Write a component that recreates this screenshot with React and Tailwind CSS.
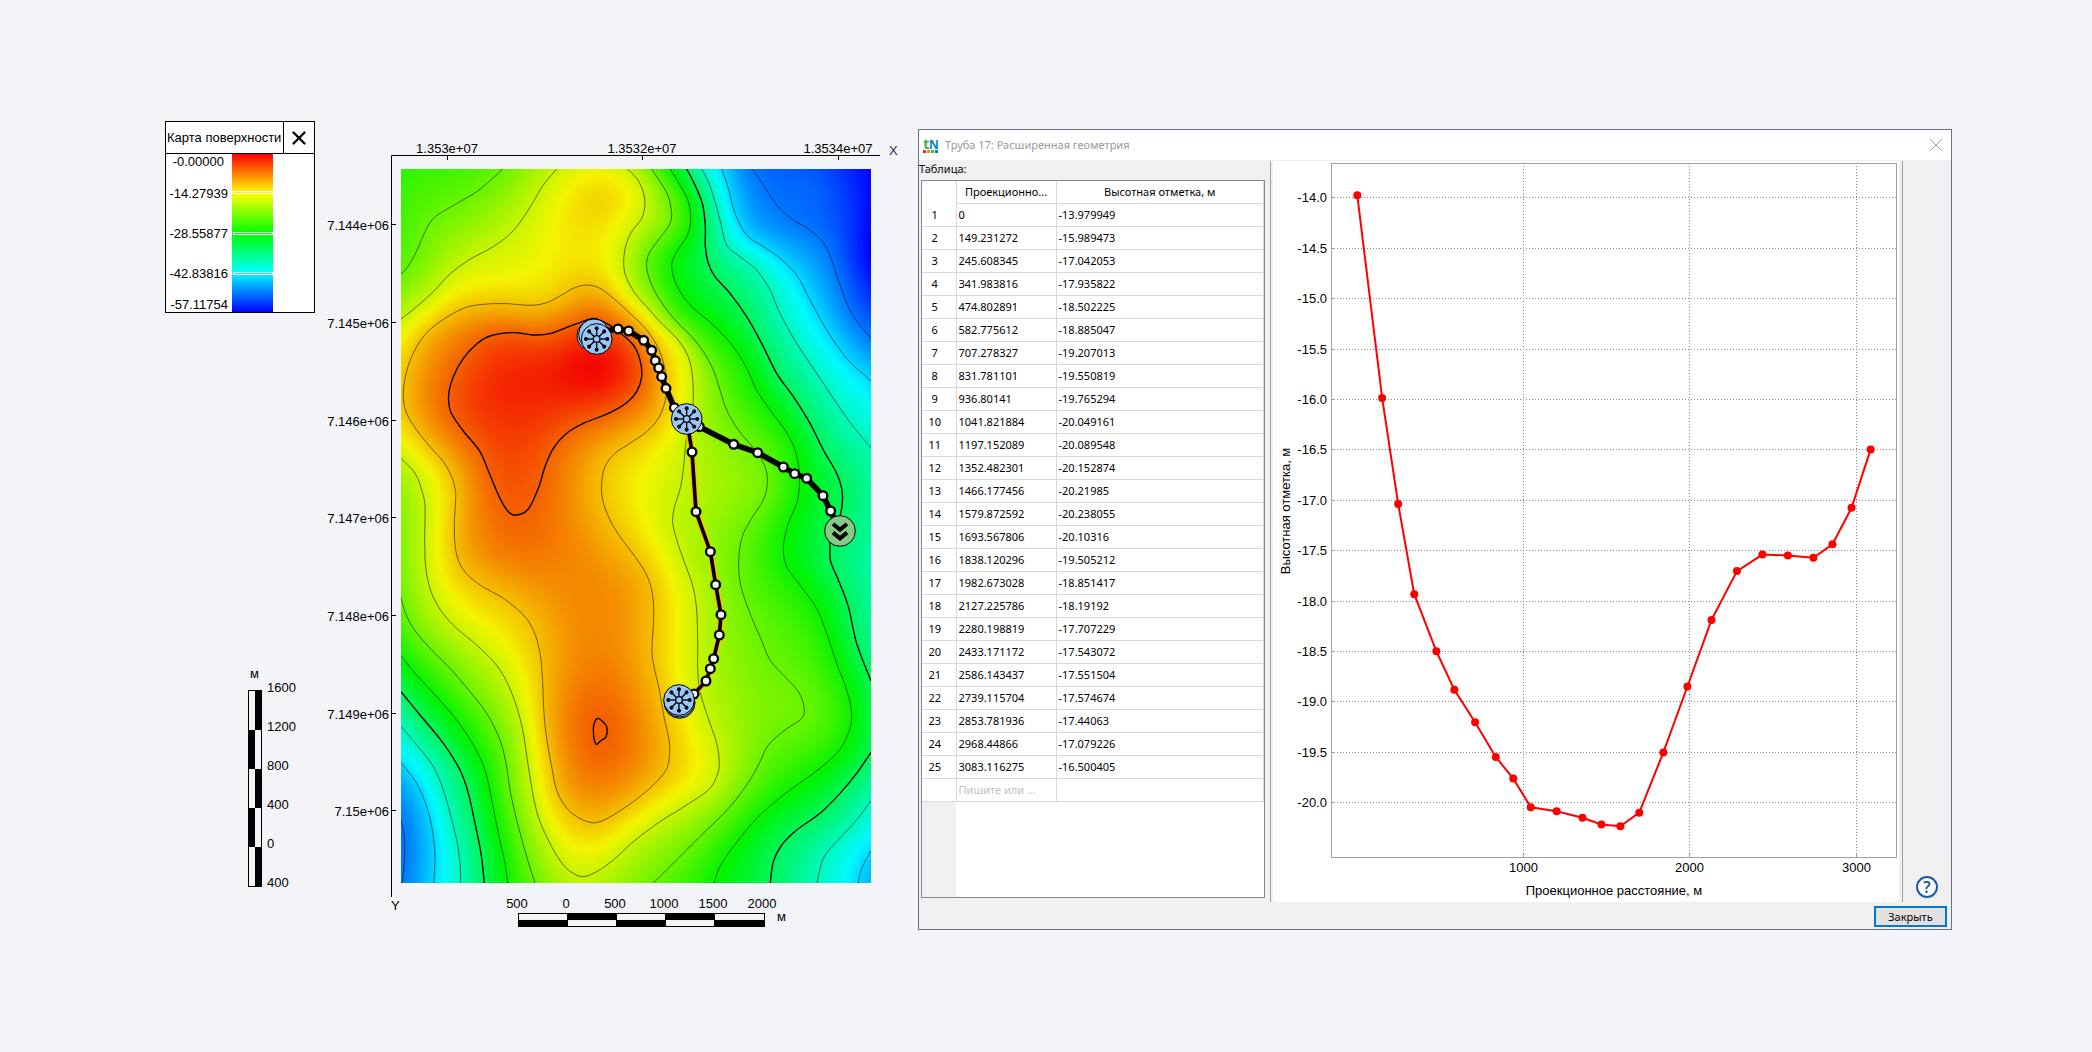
import { useEffect, useRef } from "react";
import { X } from "lucide-react";

// Surface drawing units: three per pixel
const MAP_W = 1410;
const MAP_H = 2142;

// level: 0 red, 1 yellow, 2 green, 3 cyan, 4 blue
const contours = [
  { level: 1.57, pts: "305,0 267,35 227,68 177,98 137,121 97,148 72,188 55,228 37,266 19,295 0,316" },
  { level: 1.18, pts: "467,0 427,48 397,98 362,153 327,195 277,233 207,271 147,315 97,368 47,413 0,450" },
  {
    level: 1.18,
    pts: "679,0 707,28 725,63 732,103 722,148 692,188 675,228 668,278 675,323 702,373 737,413 777,458 827,508 857,553 872,603 877,673 873,730 855,818 849,883 839,953 822,1008 815,1048 819,1083 837,1143 859,1203 877,1258 887,1323 890,1413 890,1493 894,1553 907,1603 927,1663 947,1723 955,1783 947,1823 922,1863 857,1908 777,1958 697,2018 637,2073 587,2108 547,2123 517,2113 487,2088 452,2033 417,1958 399,1893 382,1793 367,1693 347,1613 317,1538 282,1483 227,1428 167,1378 122,1328 92,1273 75,1203 71,1113 72,1013 62,963 42,913 0,868",
  },
  {
    level: 0.79,
    closed: true,
    pts: "557,348 597,358 637,388 687,433 737,483 772,538 790,593 796,653 792,698 772,748 737,788 687,823 642,853 612,893 602,943 605,993 627,1053 657,1103 702,1163 737,1218 754,1273 758,1343 753,1443 759,1493 775,1563 789,1643 804,1713 805,1763 795,1803 757,1848 697,1898 637,1938 597,1958 567,1960 527,1943 492,1911 467,1863 452,1793 437,1708 429,1633 424,1523 417,1453 399,1388 367,1338 307,1288 237,1248 187,1203 165,1148 160,1073 164,993 163,963 152,923 127,878 87,833 47,783 17,733 7,683 13,623 32,563 67,503 117,458 187,418 247,406 317,404 387,409 437,401 482,378 517,358",
  },
  {
    level: 0.4,
    bold: true,
    closed: true,
    pts: "537,461 497,475 447,494 397,498 337,491 267,501 227,525 187,568 157,623 143,678 149,728 187,786 237,848 267,918 297,988 322,1028 347,1038 382,1020 412,958 432,893 457,838 497,793 547,763 627,731 677,701 707,668 722,623 717,573 697,528 657,491 617,463 577,448",
  },
  { level: 0.4, bold: true, closed: true, pts: "590,1648 602,1655 617,1673 615,1703 599,1715 587,1726 580,1713 577,1683 580,1661" },
  {
    level: 1.57,
    pts: "752,0 777,38 802,83 812,138 802,173 772,213 742,258 738,303 757,358 787,408 827,458 872,503 907,548 937,603 957,663 977,723 1012,783 1062,843 1092,893 1099,943 1087,993 1052,1048 1022,1108 1013,1183 1020,1253 1047,1333 1077,1403 1107,1473 1152,1523 1192,1568 1209,1613 1202,1648 1152,1683 1102,1728 1077,1778 1047,1833 987,1913 897,2003 817,2083 757,2142",
  },
  {
    level: 1.96,
    pts: "807,0 837,48 862,98 869,153 859,198 817,268 815,313 837,368 877,418 937,468 997,533 1037,598 1067,663 1107,723 1152,783 1182,843 1195,913 1190,993 1162,1063 1147,1133 1157,1193 1197,1248 1247,1318 1277,1393 1307,1483 1337,1563 1352,1633 1342,1693 1307,1753 1237,1813 1147,1878 1067,1948 997,2033 957,2093 939,2142",
  },
  {
    level: 2.35,
    bold: true,
    pts: "857,0 882,48 905,108 913,173 913,233 922,283 942,323 987,373 1037,443 1082,523 1127,613 1177,683 1227,763 1267,843 1307,913 1324,973 1317,1043 1290,1100 1287,1133 1289,1178 1312,1233 1342,1313 1367,1423 1410,1536",
  },
  { level: 2.74, pts: "902,0 922,38 942,98 957,153 977,228 1017,263 1067,303 1107,363 1137,433 1187,523 1247,613 1307,703 1357,773 1410,836" },
  { level: 3.13, pts: "962,0 982,58 1002,133 1037,198 1087,233 1137,268 1187,318 1227,393 1277,483 1337,568 1410,636" },
  { level: 3.52, pts: "1055,0 1087,48 1127,108 1177,153 1227,183 1272,228 1297,288 1317,348 1352,433 1410,508" },
  { level: 1.57, pts: "0,1286 12,1328 37,1378 87,1438 147,1498 207,1568 257,1633 297,1713 317,1793 327,1863 347,1953 377,2063 402,2142" },
  { level: 1.96, pts: "0,1461 47,1518 107,1583 167,1653 217,1728 252,1803 272,1893 292,1993 312,2083 320,2142" },
  { level: 2.35, bold: true, pts: "0,1568 57,1638 127,1723 177,1803 202,1873 222,1963 240,2053 250,2142" },
  { level: 2.74, pts: "0,1673 47,1728 97,1793 127,1863 147,1933 167,2013 177,2083 179,2142" },
  { level: 3.13, pts: "0,1781 47,1843 77,1913 94,1983 102,2063 98,2142" },
  { level: 3.52, pts: "0,1953 10,2003 11,2053 7,2113 3,2142" },
  { level: 2.35, bold: true, pts: "1410,1750 1367,1813 1317,1873 1257,1933 1187,1983 1142,2028 1117,2078 1108,2142" },
  { level: 2.74, pts: "1410,1895 1367,1953 1307,2018 1267,2068 1248,2142" },
  { level: 3.13, pts: "1410,2046 1382,2098 1372,2142" },
].map((c) => ({ ...c, pts: c.pts.split(" ").map((p) => p.split(",").map(Number)) }));

// Peaks, corners and saddles between the contours: x, y, level
const spots = [
  [0, 0, 1.82],
  [580, 100, 0.88],
  [560, 240, 0.95],
  [575, 600, 0.02],
  [330, 660, 0.15],
  [460, 640, 0.12],
  [580, 1300, 0.56],
  [330, 1150, 0.5],
  [1410, 0, 4],
  [1410, 260, 4],
  [1230, 50, 3.6],
  [1340, 150, 3.76],
  [1410, 1200, 2.65],
  [1410, 1640, 2.27],
  [1410, 2142, 3.28],
];

const stops = [
  [244, 0, 0],
  [244, 244, 0],
  [0, 244, 0],
  [0, 250, 255],
  [0, 0, 255],
];

function kernel(dx, dy) {
  const r2 = dx * dx + dy * dy;
  return r2 === 0 ? 0 : r2 * Math.log(r2);
}

// Thin plate spline through every contour point and spot height
function fitSurface() {
  const nodes = [
    ...contours.flatMap((c) => c.pts.map(([x, y]) => [x / 1000, y / 1000, c.level])),
    ...spots.map(([x, y, level]) => [x / 1000, y / 1000, level]),
  ];
  const n = nodes.length;
  const size = n + 3;
  const rows = [];
  for (let i = 0; i < size; i++) {
    const row = new Float64Array(size + 1);
    if (i < n) {
      for (let j = 0; j < n; j++) {
        row[j] = kernel(nodes[i][0] - nodes[j][0], nodes[i][1] - nodes[j][1]);
      }
      row[i] += 0.0008;
      row[n] = 1;
      row[n + 1] = nodes[i][0];
      row[n + 2] = nodes[i][1];
      row[size] = nodes[i][2];
    } else {
      for (let j = 0; j < n; j++) row[j] = i === n ? 1 : nodes[j][i - n - 1];
    }
    rows.push(row);
  }

  for (let c = 0; c < size; c++) {
    let pivot = c;
    for (let r = c + 1; r < size; r++) {
      if (Math.abs(rows[r][c]) > Math.abs(rows[pivot][c])) pivot = r;
    }
    [rows[c], rows[pivot]] = [rows[pivot], rows[c]];
    for (let r = c + 1; r < size; r++) {
      const f = rows[r][c] / rows[c][c];
      if (f === 0) continue;
      for (let k = c; k <= size; k++) rows[r][k] -= f * rows[c][k];
    }
  }
  const w = new Float64Array(size);
  for (let r = size - 1; r >= 0; r--) {
    let sum = rows[r][size];
    for (let k = r + 1; k < size; k++) sum -= rows[r][k] * w[k];
    w[r] = sum / rows[r][r];
  }

  return (x, y) => {
    let value = w[n] + w[n + 1] * x + w[n + 2] * y;
    for (let i = 0; i < n; i++) value += w[i] * kernel(x - nodes[i][0], y - nodes[i][1]);
    return value;
  };
}

function smoothPath(pts, closed) {
  const n = pts.length;
  const at = (i) => (closed ? pts[(i + n) % n] : pts[Math.max(0, Math.min(n - 1, i))]);
  let d = `M${pts[0][0]} ${pts[0][1]}`;
  for (let i = 0; i < (closed ? n : n - 1); i++) {
    const [a, b, c, e] = [at(i - 1), at(i), at(i + 1), at(i + 2)];
    d += `C${b[0] + (c[0] - a[0]) / 6} ${b[1] + (c[1] - a[1]) / 6} ${c[0] - (e[0] - b[0]) / 6} ${c[1] - (e[1] - b[1]) / 6} ${c[0]} ${c[1]}`;
  }
  return closed ? d + "Z" : d;
}

function Surface() {
  const ref = useRef(null);

  useEffect(() => {
    const canvas = ref.current;
    const ctx = canvas.getContext("2d");
    const { width, height } = canvas;
    const image = ctx.createImageData(width, height);
    const surface = fitSurface();
    for (let j = 0; j < height; j++) {
      for (let i = 0; i < width; i++) {
        const raw = surface(((i + 0.5) / width) * 1.41, ((j + 0.5) / height) * 2.142);
        const t = Math.max(0, Math.min(3.999, raw));
        const k = Math.floor(t);
        const o = (j * width + i) * 4;
        for (let c = 0; c < 3; c++) {
          image.data[o + c] = stops[k][c] + (stops[k + 1][c] - stops[k][c]) * (t - k);
        }
        image.data[o + 3] = 255;
      }
    }
    ctx.putImageData(image, 0, 0);
  }, []);

  return <canvas ref={ref} width={157} height={238} className="block h-full w-full" />;
}

const pipes = [
  { width: 17, pts: [[587, 490], [651, 480], [683, 486], [728, 514], [752, 544], [763, 575], [773, 597], [782, 623], [795, 658], [820, 716], [857, 750]] },
  { width: 17, pts: [[857, 750], [895, 773], [998, 826], [1070, 851], [1147, 894], [1181, 914], [1217, 928], [1266, 980], [1289, 1026], [1317, 1086]] },
  {
    width: 11,
    selected: true,
    pts: [[857, 750], [873, 849], [885, 1028], [928, 1148], [944, 1247], [960, 1337], [955, 1398], [938, 1469], [928, 1499], [915, 1536], [879, 1575], [834, 1593]],
  },
];

function Pipe({ width, selected, pts }) {
  const points = pts.map((p) => p.join(",")).join(" ");
  return (
    <g fill="none" strokeLinejoin="round">
      {selected && <polyline points={points} stroke="#ffc000" strokeWidth={20} />}
      <polyline points={points} stroke="#000" strokeWidth={width} />
      {pts.slice(1, -1).map(([x, y]) => (
        <circle key={x} cx={x} cy={y} r={13} fill="#f6f6f8" stroke="#000" strokeWidth={7} />
      ))}
    </g>
  );
}

function Well({ x, y, behind = [] }) {
  return (
    <g stroke="#000" fill="#99c7fb">
      {behind.map(([bx, by]) => (
        <circle key={bx} cx={bx} cy={by} r={46} strokeWidth={3} />
      ))}
      <circle cx={x} cy={y} r={46} strokeWidth={3} />
      {[0, 45, 90, 135, 180, 225, 270, 315].map((a) => (
        <g key={a} transform={`rotate(${a} ${x} ${y})`}>
          <line x1={x} y1={y - 11} x2={x} y2={y - 32} strokeWidth={4} />
          <circle cx={x} cy={y - 32} r={6} fill="#000" stroke="none" />
        </g>
      ))}
      <circle cx={x} cy={y} r={10} strokeWidth={4} />
    </g>
  );
}

const xTicks = [
  [127, "1.353e+07"],
  [322, "1.3532e+07"],
  [518, "1.3534e+07"],
];
const yTicks = [
  [90, "7.144e+06"],
  [188, "7.145e+06"],
  [286, "7.146e+06"],
  [383, "7.147e+06"],
  [481, "7.148e+06"],
  [579, "7.149e+06"],
  [676, "7.15e+06"],
];

function SurfaceMap() {
  return (
    <svg viewBox="0 0 586 800" className="block h-auto w-[586px] shrink-0 font-['Liberation_Sans',sans-serif] text-[13px]">
      <path d="M71.5 762V20.5H560" fill="none" stroke="#000" />
      {xTicks.map(([x, label]) => (
        <g key={label}>
          <path d={`M${x + 0.5} 20v5`} stroke="#000" />
          <text x={x} y={18} textAnchor="middle">
            {label}
          </text>
        </g>
      ))}
      {yTicks.map(([y, label]) => (
        <g key={label}>
          <path d={`M71 ${y - 0.5}h5`} stroke="#000" />
          <text x={69} y={y + 5} textAnchor="end">
            {label}
          </text>
        </g>
      ))}
      <text x={569} y={20} fill="#1f2d4d">
        X
      </text>
      <text x={71} y={775}>
        Y
      </text>

      <foreignObject x={81} y={34} width={470} height={714}>
        <Surface />
      </foreignObject>
      <svg x={81} y={34} width={470} height={714} viewBox={`0 0 ${MAP_W} ${MAP_H}`}>
        {contours.map((c, i) => (
          <path
            key={i}
            d={smoothPath(c.pts, c.closed)}
            fill="none"
            stroke="#000"
            strokeWidth={c.bold ? 4 : 2}
            strokeOpacity={c.bold ? 1 : 0.8}
          />
        ))}
        {pipes.map((pipe, i) => (
          <Pipe key={i} {...pipe} />
        ))}
        <Well x={587} y={510} behind={[[574, 500], [579, 496]]} />
        <Well x={857} y={750} />
        <Well x={834} y={1593} behind={[[836, 1602], [835, 1598]]} />
        <circle cx={1317} cy={1086} r={46} fill="#87c987" stroke="#000" strokeWidth={3} />
        <path d="M1296 1065l21 17 21-17M1296 1091l21 17 21-17" fill="none" stroke="#000" strokeWidth={12} />
      </svg>

      {["500", "0", "500", "1000", "1500", "2000"].map((label, i) => (
        <text key={i} x={197 + i * 49} y={773} textAnchor="middle">
          {label}
        </text>
      ))}
      <rect x={198.5} y={778.5} width={246} height={13} fill="none" stroke="#000" />
      {[0, 1, 2, 3, 4].map((i) => (
        <rect key={i} x={198 + i * 49} y={i % 2 ? 778 : 785} width={50} height={7} />
      ))}
      <text x={457} y={786}>
        м
      </text>
    </svg>
  );
}

function Legend() {
  return (
    <section className="border border-black bg-white">
      <header className="flex h-8 items-stretch border-b border-black">
        <h2 className="flex flex-1 items-center whitespace-nowrap pl-px">Карта поверхности</h2>
        <button type="button" aria-label="Закрыть легенду" className="flex w-[31px] items-center justify-center border-l border-black">
          <X className="size-[22px]" strokeWidth={2.5} />
        </button>
      </header>
      <div className="flex gap-1">
        <div className="flex w-[62px] flex-col text-right">
          <span className="flex h-4 items-center justify-end pr-1">-0.00000</span>
          <span className="flex h-12 items-center justify-end">-14.27939</span>
          <span className="flex h-8 items-center justify-end">-28.55877</span>
          <span className="flex h-12 items-center justify-end">-42.83816</span>
          <span className="flex h-3.5 items-center justify-end">-57.11754</span>
        </div>
        <div className="flex w-[41px] flex-col justify-evenly bg-[linear-gradient(to_bottom,#ff0000,#ffff00_25%,#00ff00_50%,#00ffff_75%,#0000ff)] pl-px">
          <span className="h-[3px] border border-white" />
          <span className="h-[3px] border border-white" />
          <span className="h-[3px] border border-white" />
        </div>
      </div>
    </section>
  );
}

function VerticalScale() {
  return (
    <div className="flex gap-[5px] pl-[83px] leading-4">
      <div className="flex flex-col gap-2">
        <span className="pl-0.5">м</span>
        <div className="w-3.5 border border-black">
          {[0, 1, 2, 3, 4].map((i) => (
            <div key={i} className={`flex h-[39px] ${i % 2 ? "justify-start" : "justify-end"}`}>
              <div className="w-1/2 bg-black" />
            </div>
          ))}
        </div>
      </div>
      <div className="flex flex-col gap-[23px] pt-3.5">
        {["1600", "1200", "800", "400", "0", "400"].map((label, i) => (
          <span key={i}>{label}</span>
        ))}
      </div>
    </div>
  );
}

const rows = [
  ["0", "-13.979949"],
  ["149.231272", "-15.989473"],
  ["245.608345", "-17.042053"],
  ["341.983816", "-17.935822"],
  ["474.802891", "-18.502225"],
  ["582.775612", "-18.885047"],
  ["707.278327", "-19.207013"],
  ["831.781101", "-19.550819"],
  ["936.80141", "-19.765294"],
  ["1041.821884", "-20.049161"],
  ["1197.152089", "-20.089548"],
  ["1352.482301", "-20.152874"],
  ["1466.177456", "-20.21985"],
  ["1579.872592", "-20.238055"],
  ["1693.567806", "-20.10316"],
  ["1838.120296", "-19.505212"],
  ["1982.673028", "-18.851417"],
  ["2127.225786", "-18.19192"],
  ["2280.198819", "-17.707229"],
  ["2433.171172", "-17.543072"],
  ["2586.143437", "-17.551504"],
  ["2739.115704", "-17.574674"],
  ["2853.781936", "-17.44063"],
  ["2968.44866", "-17.079226"],
  ["3083.116275", "-16.500405"],
];

function GeometryTable() {
  return (
    <div className="flex flex-1 flex-col border border-[#828790] bg-white">
      <table id="geometry" className="w-full table-fixed border-collapse text-left text-[11px] leading-none">
        <colgroup>
          <col className="w-[34px]" />
          <col className="w-[100px]" />
          <col />
        </colgroup>
        <thead>
          <tr className="h-[22px]">
            <td className="border-r border-[#d8d8d8]" />
            <th className="border border-t-0 border-[#d8d8d8] text-center font-normal">Проекционно...</th>
            <th className="border border-t-0 border-[#d8d8d8] text-center font-normal">Высотная отметка, м</th>
          </tr>
        </thead>
        <tbody>
          {rows.map(([distance, height], i) => (
            <tr key={distance} className="h-[23px]">
              <th className="border-r border-b border-[#d8d8d8] pr-2 text-center font-normal">{i + 1}</th>
              <td className="border border-[#d8d8d8] pl-0.5">{distance}</td>
              <td className="border border-[#d8d8d8] pl-0.5">{height}</td>
            </tr>
          ))}
          <tr className="h-[23px]">
            <th className="border-r border-b border-[#d8d8d8]" />
            <td className="border border-[#d8d8d8] pl-0.5">
              <input
                aria-label="Проекционное расстояние"
                placeholder="Пишите или ..."
                className="block w-full bg-transparent outline-none placeholder:text-[#c0c0c0]"
              />
            </td>
            <td className="border border-[#d8d8d8]" />
          </tr>
        </tbody>
      </table>
      <div className="w-[34px] flex-1 bg-[#f0f0f0]" />
    </div>
  );
}

function ProfileChart() {
  const px = (v) => 84.3 + v * 0.1665;
  const py = (v) => 36.3 + (-14 - v) * 100.83;
  const points = rows.map(([x, y]) => [px(Number(x)), py(Number(y))]);
  const levels = Array.from({ length: 13 }, (_, i) => -14 - i / 2);

  return (
    <svg viewBox="0 0 626 741" className="block h-auto w-full font-['Liberation_Sans',sans-serif] text-[13px]">
      {levels.map((v) => {
        const y = Math.round(py(v)) + 0.5;
        return (
          <g key={v}>
            <path d={`M58 ${y}H623`} stroke="#8c8c8c" strokeDasharray="1 2" />
            <path d={`M58 ${y}h4`} stroke="#999" />
            <text x={54} y={y + 4} textAnchor="end">
              {v.toFixed(1)}
            </text>
          </g>
        );
      })}
      {[1000, 2000, 3000].map((v) => {
        const x = Math.round(px(v)) - 0.5;
        return (
          <g key={v}>
            <path d={`M${x} 2V697`} stroke="#8c8c8c" strokeDasharray="1 2" />
            <path d={`M${x} 697v-4`} stroke="#999" />
            <text x={x} y={711} textAnchor="middle">
              {v}
            </text>
          </g>
        );
      })}
      <rect x={58.5} y={2.5} width={565} height={694} fill="none" stroke="#a0a0a0" />
      <polyline points={points.map((p) => p.join(",")).join(" ")} fill="none" stroke="#f00" strokeWidth={2} />
      {points.map(([x, y]) => (
        <circle key={x} cx={x} cy={y} r={4} fill="#f00" />
      ))}
      <text x={341} y={734} textAnchor="middle">
        Проекционное расстояние, м
      </text>
      <text transform="translate(17 350) rotate(-90)" textAnchor="middle">
        Высотная отметка, м
      </text>
    </svg>
  );
}

function Logo() {
  return (
    <svg viewBox="0 0 16 20" className="h-5 w-4 overflow-visible font-['Open_Sans',sans-serif] font-bold">
      <text x={0} y={14} fontSize={15} fill="#3db54a">
        t
      </text>
      <text x={6} y={14} fontSize={12} fill="#0a80c4">
        N
      </text>
      <path d="M0 15h3v3H0z" fill="#e8262a" />
      <path d="M4 15h3v3H4z" fill="#f58220" />
      <path d="M8 15h3v3H8z" fill="#3db54a" />
      <path d="M12 15h3v3h-3z" fill="#0a80c4" />
    </svg>
  );
}

function GeometryDialog() {
  return (
    <section role="dialog" aria-labelledby="dialog-title" className="mt-2 flex min-w-0 flex-1 flex-col border border-[#6b7080] bg-[#f0f0f0] font-['Noto_Sans',sans-serif] text-[11px]">
      <header className="flex h-[30px] items-center gap-1.5 bg-white pr-1 pl-1">
        <Logo />
        <h1 id="dialog-title" className="flex-1 text-[#999]">
          Труба 17: Расширенная геометрия
        </h1>
        <button type="button" aria-label="Закрыть окно" className="text-[#999]">
          <X className="size-[22px]" strokeWidth={1} />
        </button>
      </header>

      <div className="mt-px flex">
        <div className="flex w-[346px] flex-col pl-0.5">
          <label htmlFor="geometry" className="-ml-0.5 h-[19px] leading-4">
            Таблица:
          </label>
          <GeometryTable />
          <div className="h-1" />
        </div>
        <div className="ml-[5px] min-w-0 flex-1 border-l border-[#a0a0a0] pl-0.5">
          <div className="bg-white">
            <ProfileChart />
          </div>
        </div>
        <div className="ml-[3px] flex w-[49px] flex-col items-center justify-end border-l border-[#a0a0a0] pb-1">
          <button type="button" aria-label="Справка" className="flex size-[22px] items-center justify-center rounded-full border-2 border-[#1c5ba8] bg-white text-base font-semibold text-[#1c5ba8]">
            ?
          </button>
        </div>
      </div>

      <footer className="flex justify-end pt-1 pr-1 pb-0.5">
        <button type="button" className="h-[21px] w-[73px] border-2 border-[#0078d7] bg-[#e1e1e1] leading-none">
          Закрыть
        </button>
      </footer>
    </section>
  );
}

export default function App() {
  return (
    <main className="flex min-h-screen items-start bg-[#f3f4f8] pt-[121px] pr-[140px] pb-10 pl-[165px] font-['Liberation_Sans',sans-serif] text-[13px] leading-4 text-black">
      <div className="flex w-[150px] shrink-0 flex-col gap-[353px]">
        <Legend />
        <VerticalScale />
      </div>
      <div className="ml-[5px] mt-3.5">
        <SurfaceMap />
      </div>
      <div className="ml-3 flex min-w-0 flex-1">
        <GeometryDialog />
      </div>
    </main>
  );
}
